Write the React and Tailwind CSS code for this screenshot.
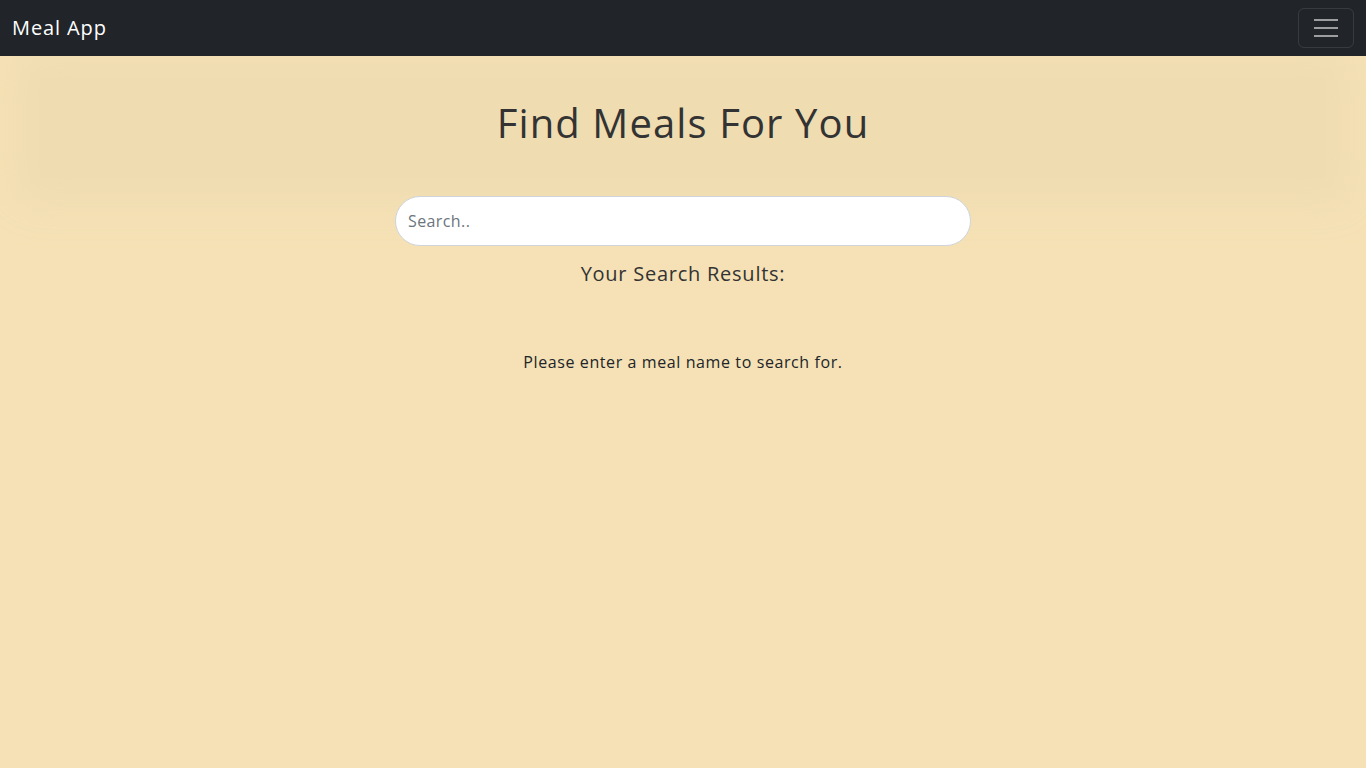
import React from 'react';

export default function App() {
    return (
        <div className="min-h-screen bg-[#f5e1b5] text-[#333]" style={{ fontFamily: '"Open Sans", "Liberation Sans", sans-serif' }}>
            <nav className="relative z-10 h-14 bg-[#212529] flex items-center justify-between px-3">
                <span className="text-white text-[20px] font-medium tracking-[0.9px]">Meal App</span>
                <button className="w-14 h-10 border border-white/10 rounded-md flex flex-col items-center justify-center gap-[6px]">
                    <span className="block w-[24px] h-[2px] bg-white/55"></span>
                    <span className="block w-[24px] h-[2px] bg-white/55"></span>
                    <span className="block w-[24px] h-[2px] bg-white/55"></span>
                </button>
            </nav>
            <div className="px-[40px] pt-[22px]">
                <div className="bg-[#efdcb1] shadow-[0_0_40px_24px_#efdcb1] h-[100px] flex justify-center pt-[21px]">
                    <h1 className="text-[40px] leading-[48px] font-normal tracking-[1.1px] text-[#333]">Find Meals For You</h1>
                </div>
            </div>
            <div className="flex flex-col items-center pt-[18px]">
                <input
                    type="text"
                    placeholder="Search.."
                    className="w-[576px] h-[50px] bg-white border border-[#ced4da] rounded-[25px] px-3 text-base tracking-[0.4px] text-[#212529] placeholder:text-[#6c757d] outline-none"
                />
                <h4 className="mt-[16px] text-[20px] leading-[24px] font-medium tracking-[0.75px] text-[#333]">Your Search Results:</h4>
                <p className="mt-[64px] text-base tracking-[0.6px] text-[#212529]">Please enter a meal name to search for.</p>
            </div>
        </div>
    );
}
